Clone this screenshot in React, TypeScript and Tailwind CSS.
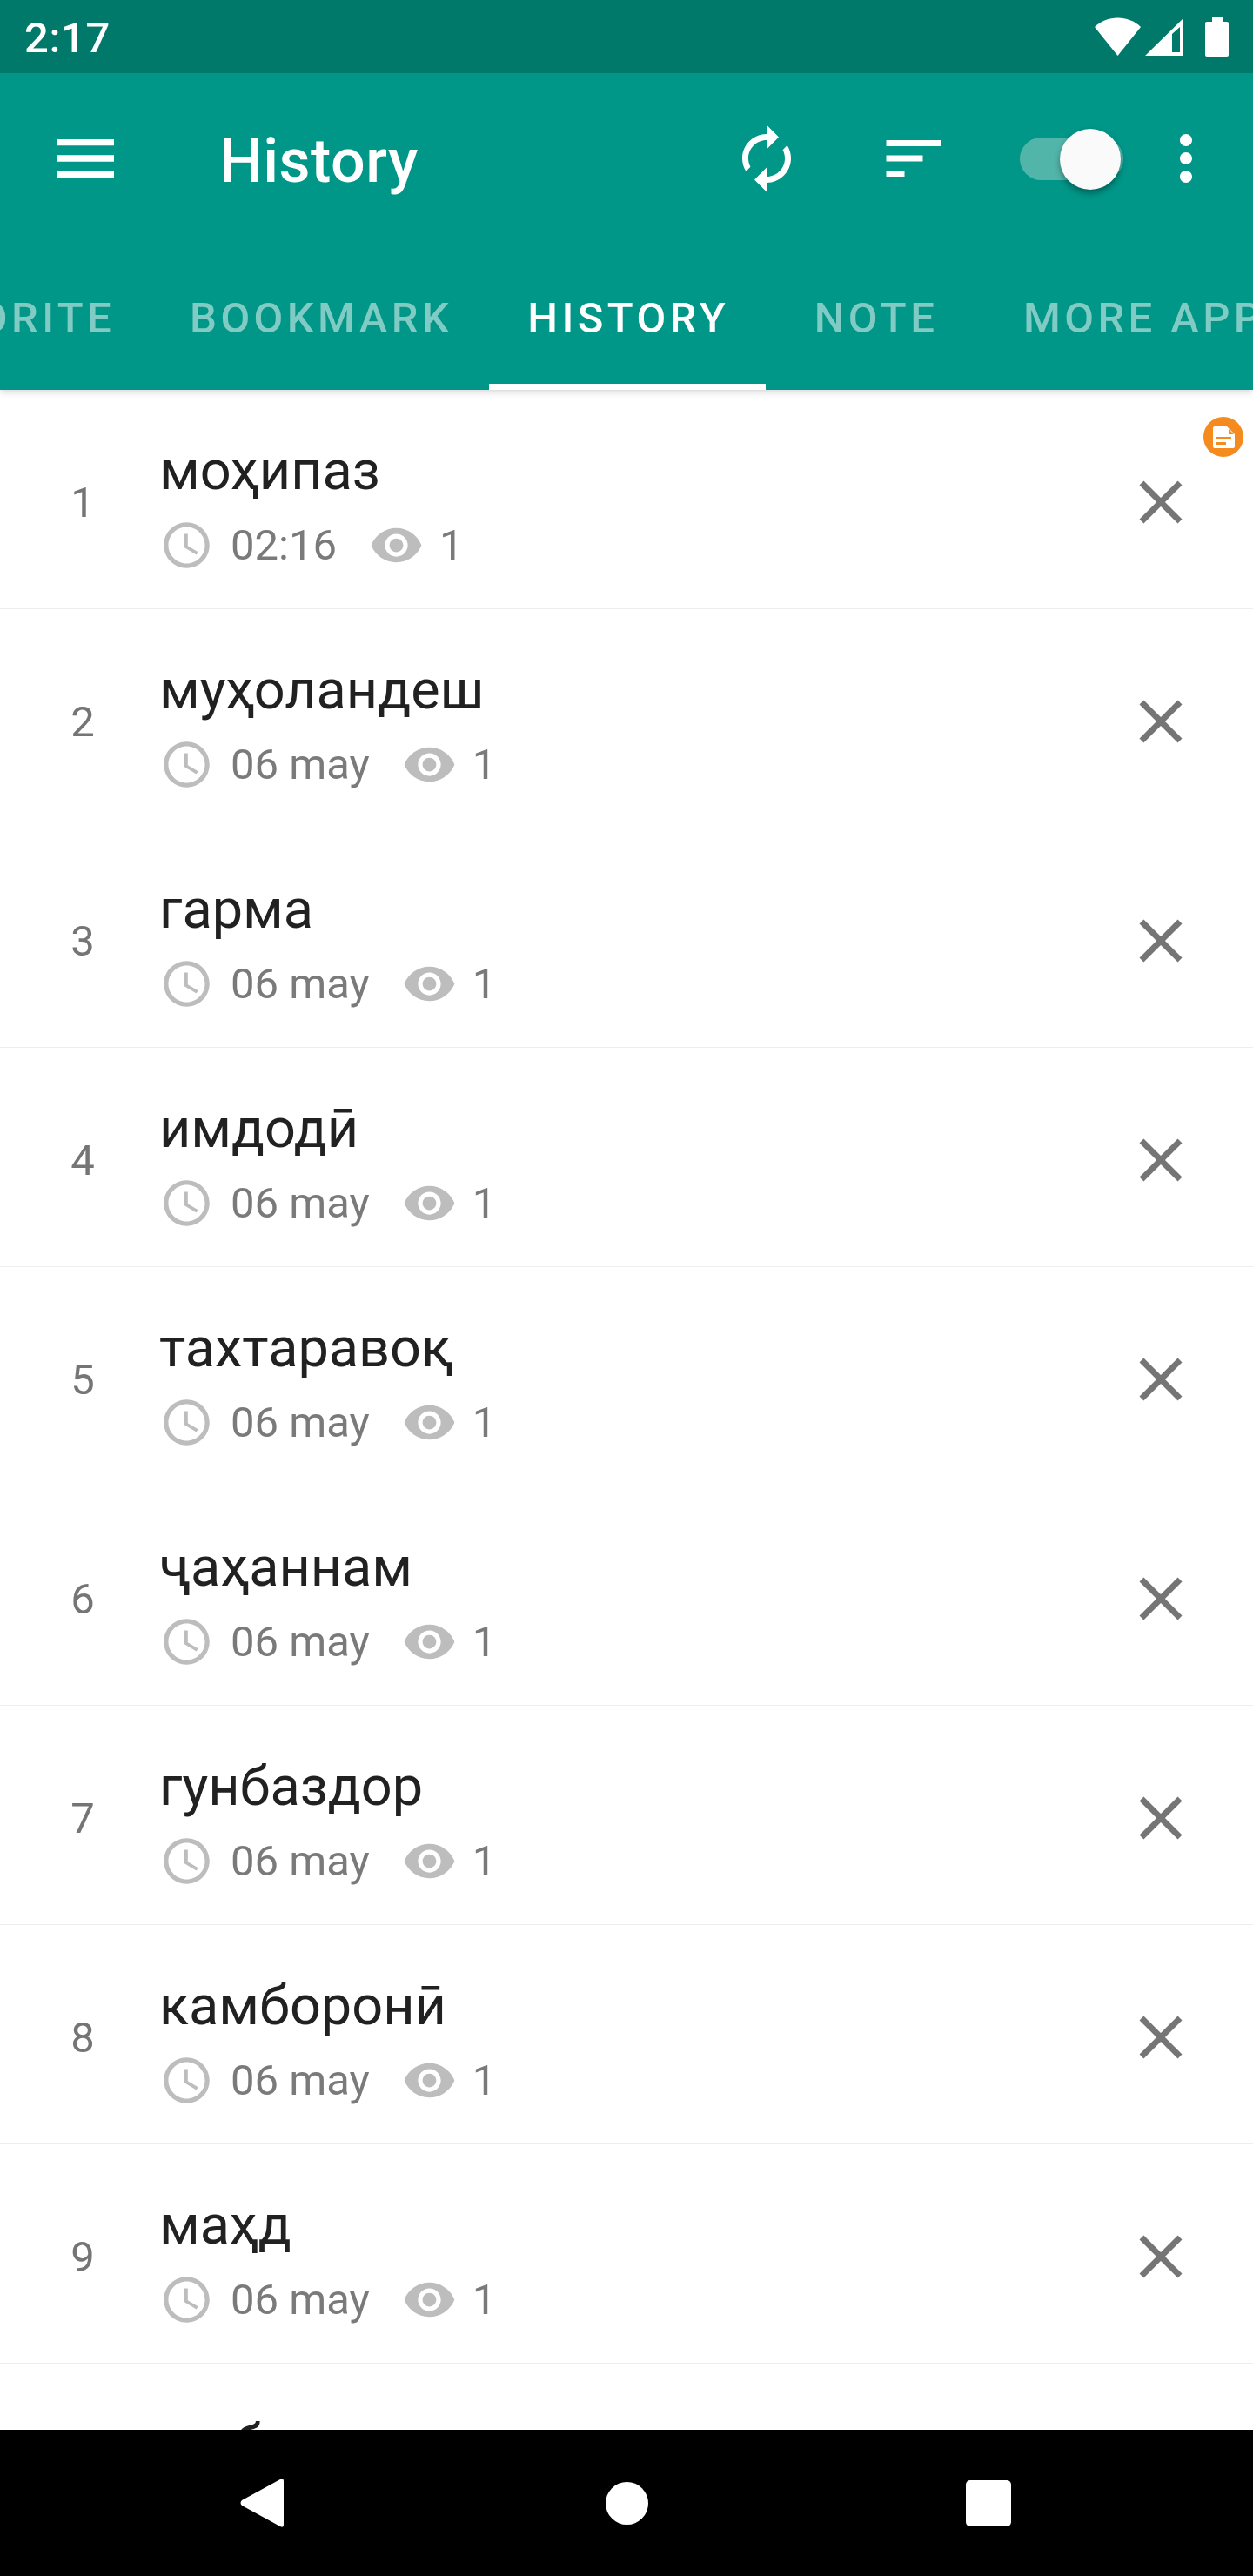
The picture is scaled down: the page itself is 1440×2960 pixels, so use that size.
const ROBOTO = "font-['Roboto',sans-serif]";

const rows = [
  { title: "моҳипаз", date: "02:16", note: true },
  { title: "муҳоландеш", date: "06 may" },
  { title: "гарма", date: "06 may" },
  { title: "имдодӣ", date: "06 may" },
  { title: "тахтаравоқ", date: "06 may" },
  { title: "ҷаҳаннам", date: "06 may" },
  { title: "гунбаздор", date: "06 may" },
  { title: "камборонӣ", date: "06 may" },
  { title: "маҳд", date: "06 may" },
  { title: "шабнам", date: "06 may" },
];

const tabs = ["FAVORITE", "BOOKMARK", "HISTORY", "NOTE", "MORE APPS"];

function Icon({ d, className }: { d: string; className: string }) {
  return (
    <svg viewBox="0 0 24 24" className={className} fill="currentColor">
      <path d={d} />
    </svg>
  );
}

function StatusBar() {
  return (
    <div className="h-[84px] shrink-0 bg-[#00796b] flex items-center justify-between px-[28px] text-white">
      <span className="text-[49px] leading-[84px] font-medium tracking-[0.6px] pt-[3px]">2:17</span>
      <div className="flex items-center">
        <svg viewBox="0 0 53 44" className="w-[53px] h-[44px]" fill="currentColor">
          <path d="M0 11 C14 -3 39 -3 53 11 L26.5 44 Z" />
        </svg>
        <svg viewBox="0 0 44 43" className="w-[44px] h-[43px] ml-[5px]" fill="currentColor">
          <path fillRule="evenodd" d="M44 0 V43 H0 Z M40 10 L31 18 V39 H40 Z" />
        </svg>
        <svg viewBox="0 0 27 45" className="w-[27px] h-[45px] ml-[25px]" fill="currentColor">
          <path d="M8 0 H20 V5 H25 Q27 5 27 7 V43 Q27 45 25 45 H2 Q0 45 0 43 V7 Q0 5 2 5 H8 Z" />
        </svg>
      </div>
    </div>
  );
}

function Toolbar() {
  return (
    <div className="h-[196px] shrink-0 flex items-center text-white">
      <div className="w-[196px] pl-[54px] shrink-0">
        <Icon d="M3 18h18v-2H3v2zm0-5h18v-2H3v2zm0-7v2h18V6H3z" className="w-[88px] h-[88px]" />
      </div>
      <h1 className="text-[70px] leading-none font-medium tracking-[0.5px] w-[643px] pl-[56px] pt-[6px] shrink-0">History</h1>
      <Icon
        d="M12 6v3l4-4-4-4v3c-4.42 0-8 3.58-8 8 0 1.57.46 3.03 1.24 4.26L6.7 14.8c-.45-.83-.7-1.79-.7-2.8 0-3.31 2.69-6 6-6zm6.76 1.74L17.3 9.2c.44.84.7 1.79.7 2.8 0 3.31-2.69 6-6 6v-3l-4 4 4 4v-3c4.42 0 8-3.58 8-8 0-1.57-.46-3.03-1.24-4.26z"
        className="w-[84px] h-[84px] shrink-0"
      />
      <Icon d="M3 18h6v-2H3v2zM3 6v2h18V6H3zm0 7h12v-2H3v2z" className="w-[84px] h-[84px] ml-[85px] shrink-0" />
      <div className="relative w-[119px] h-[49px] ml-[80px] shrink-0 rounded-full bg-[#52b5a9]">
        <div className="absolute right-[3px] top-[-10px] w-[70px] h-[70px] rounded-full bg-[#fafafa] shadow-[0_4px_7px_rgba(0,0,0,0.35)]" />
      </div>
      <Icon
        d="M12 8c1.1 0 2-.9 2-2s-.9-2-2-2-2 .9-2 2 .9 2 2 2zm0 2c-1.1 0-2 .9-2 2s.9 2 2 2 2-.9 2-2-.9-2-2-2zm0 6c-1.1 0-2 .9-2 2s.9 2 2 2 2-.9 2-2-.9-2-2-2z"
        className="w-[84px] h-[84px] ml-[30px] shrink-0"
      />
    </div>
  );
}

function TabBar() {
  return (
    <div className="h-[168px] shrink-0 flex overflow-hidden">
      <div className="flex shrink-0 -ml-[167px]">
        {tabs.map((tab) => (
          <div
            key={tab}
            className={`h-[168px] min-w-[252px] pl-[44px] pr-[42px] pt-[10px] flex items-center justify-center shrink-0 text-[49px] font-medium tracking-[4.4px] whitespace-nowrap border-b-[7px] ${
              tab === "HISTORY" ? "text-white border-white" : "text-[#80cbc4] border-transparent"
            }`}
          >
            {tab}
          </div>
        ))}
      </div>
    </div>
  );
}

function Row({ index, title, date, note }: { index: number; title: string; date: string; note?: boolean }) {
  return (
    <div className="relative h-[252px] shrink-0 flex items-center border-b border-[#eeeeee]">
      <span className="w-[60px] ml-[65px] mt-[8px] text-center text-[49px] leading-none text-[#757575]">{index}</span>
      <div className="ml-[58px] flex-1 self-start pt-[55px] flex flex-col">
        <span className="text-[63px] leading-[76px] text-[#212121]">{title}</span>
        <div className="flex items-center h-[80px] mt-[7px] text-[49px] leading-none text-[#7a7a7a]">
          <Icon
            d="M11.99 2C6.47 2 2 6.48 2 12s4.47 10 9.99 10C17.52 22 22 17.52 22 12S17.52 2 11.99 2zM12 20c-4.42 0-8-3.58-8-8s3.58-8 8-8 8 3.58 8 8-3.58 8-8 8zm.5-13H11v6l5.25 3.15.75-1.23-4.5-2.67z"
            className="w-[63px] h-[63px] text-[#bdbdbd] shrink-0"
          />
          <span className="ml-[19px]">{date}</span>
          <Icon
            d="M12 4.5C7 4.5 2.73 7.61 1 12c1.73 4.39 6 7.5 11 7.5s9.27-3.11 11-7.5c-1.73-4.39-6-7.5-11-7.5zM12 17c-2.76 0-5-2.24-5-5s2.24-5 5-5 5 2.24 5 5-2.24 5-5 5zm0-8c-1.66 0-3 1.34-3 3s1.34 3 3 3 3-1.34 3-3-1.34-3-3-3z"
            className="w-[63px] h-[63px] ml-[37px] text-[#bdbdbd] shrink-0"
          />
          <span className="ml-[18px]">1</span>
        </div>
      </div>
      <Icon
        d="M19 6.41L17.59 5 12 10.59 6.41 5 5 6.41 10.59 12 5 17.59 6.41 19 12 13.41 17.59 19 19 17.59 13.41 12z"
        className="w-[84px] h-[84px] mr-[64px] mt-[6px] text-[#757575] shrink-0"
      />
      {note && (
        <div className="absolute right-[11px] top-[31px] w-[46px] h-[46px] rounded-full bg-[#f58b1f] flex items-center justify-center">
          <svg viewBox="0 0 25 25" className="w-[25px] h-[25px]">
            <path fill="#ffffff" d="M2 0 H16 L25 9 V23 Q25 25 23 25 H2 Q0 25 0 23 V2 Q0 0 2 0 Z" />
            <path fill="#f58b1f" d="M18 3 L24 9 H18 Z M3 12 H21 V15 H3 Z M3 18 H15 V21 H3 Z" />
          </svg>
        </div>
      )}
    </div>
  );
}

function NavBar() {
  return (
    <div className="h-[168px] shrink-0 bg-black flex items-center justify-center">
      <div className="w-[600px] shrink-0 flex justify-end pr-[370px]">
        <svg viewBox="0 0 50 56" className="w-[50px] h-[56px]">
          <path fill="#ffffff" d="M46 1 Q50 -1 50 3 V53 Q50 57 46 55 L2 31 Q-1 28 2 25 Z" />
        </svg>
      </div>
      <div className="w-[49px] h-[49px] rounded-full bg-white shrink-0" />
      <div className="w-[600px] shrink-0 flex pl-[365px]">
        <div className="w-[52px] h-[53px] rounded-[5px] bg-white" />
      </div>
    </div>
  );
}

export default function App() {
  return (
    <div className={`w-[1440px] h-[2960px] flex flex-col overflow-hidden bg-white ${ROBOTO}`}>
      <div className="bg-[#009688] shrink-0 relative z-10 shadow-[0_2px_8px_rgba(0,0,0,0.18)]">
        <StatusBar />
        <Toolbar />
        <TabBar />
      </div>
      <div className="flex-1 min-h-0 flex flex-col overflow-hidden">
        {rows.map((row, i) => (
          <Row key={row.title} index={i + 1} title={row.title} date={row.date} note={row.note} />
        ))}
      </div>
      <NavBar />
    </div>
  );
}
